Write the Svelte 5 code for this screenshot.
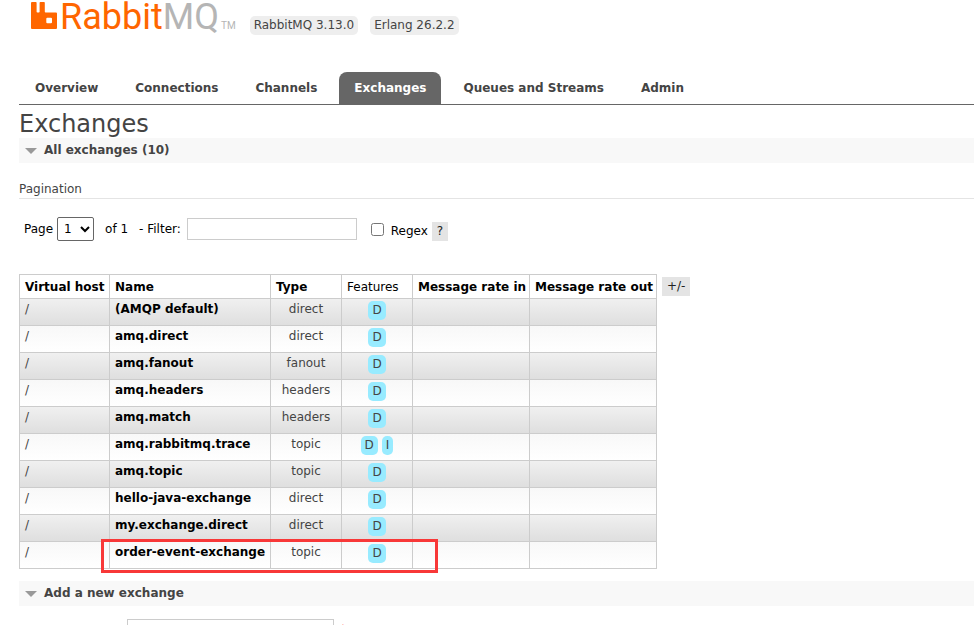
<script>
  const tabs = ['Overview', 'Connections', 'Channels', 'Exchanges', 'Queues and Streams', 'Admin'];
  const current = 'Exchanges';

  const exchanges = [
    { name: '(AMQP default)', type: 'direct', features: ['D'] },
    { name: 'amq.direct', type: 'direct', features: ['D'] },
    { name: 'amq.fanout', type: 'fanout', features: ['D'] },
    { name: 'amq.headers', type: 'headers', features: ['D'] },
    { name: 'amq.match', type: 'headers', features: ['D'] },
    { name: 'amq.rabbitmq.trace', type: 'topic', features: ['D', 'I'] },
    { name: 'amq.topic', type: 'topic', features: ['D'] },
    { name: 'hello-java-exchange', type: 'direct', features: ['D'] },
    { name: 'my.exchange.direct', type: 'direct', features: ['D'] },
    { name: 'order-event-exchange', type: 'topic', features: ['D'], marked: true }
  ];

  let filter = $state('');
  let regex = $state(false);
  let newName = $state('');
</script>

<div class="page">
  <header>
    <a class="logo" href="#/" aria-label="RabbitMQ">
      <svg width="26" height="28" viewBox="0 0 26 28" aria-hidden="true">
        <path
          fill="#f60"
          fill-rule="evenodd"
          d="M1 1h3.8q.8 0 .8.8v9q0 .8.8.8h1.400q.8 0 .8-.8v-9q0-.8.8-.8h3.600q.8 0 .8.8v9q0 .8.8.8H25q1 0 1 1V27q0 1-1 1H1q-1 0-1-1V2q0-1 1-1zM16.300 16.800q-1 0-1 1v3.400q0 1 1 1h3.700q1 0 1-1v-3.400q0-1-1-1z"
        />
      </svg>
      <span class="word">Rabbit<span class="mq">MQ</span></span>
      <span class="tm">TM</span>
    </a>
    <span class="version">RabbitMQ 3.13.0</span>
    <span class="version">Erlang 26.2.2</span>
  </header>

  <nav>
    {#each tabs as tab}
      <a href="#/{tab.toLowerCase()}" class:selected={tab === current}>{tab}</a>
    {/each}
  </nav>

  <main>
    <h1>Exchanges</h1>
    <h2><button type="button"><i class="arrow"></i>All exchanges (10)</button></h2>

    <h3>Pagination</h3>
    <div class="pager">
      <label for="page">Page</label>
      <select id="page"><option>1</option></select>
      <span class="total">of 1</span>
      <label class="filter" for="filter">- Filter:</label>
      <input id="filter" class="text" type="text" bind:value={filter} />
      <input id="regex" type="checkbox" bind:checked={regex} />
      <label class="low" for="regex">Regex</label>
      <button type="button" class="small low">?</button>
    </div>

    <div class="listing">
      <table>
        <colgroup>
          <col class="c-host" /><col class="c-name" /><col class="c-type" /><col class="c-type" />
          <col class="c-in" /><col class="c-out" />
        </colgroup>
        <thead>
          <tr>
            <th>Virtual host</th>
            <th>Name</th>
            <th>Type</th>
            <th class="plain">Features</th>
            <th>Message rate in</th>
            <th>Message rate out</th>
          </tr>
        </thead>
        <tbody>
          {#each exchanges as x}
            <tr>
              <td>/</td>
              <td class="name">
                {#if x.marked}<span class="mark"></span>{/if}
                <a href="#/exchanges/{x.name}">{x.name}</a>
              </td>
              <td class="center">{x.type}</td>
              <td class="features">
                <div>{#each x.features as f}<span class="badge">{f}</span>{/each}</div>
              </td>
              <td></td>
              <td></td>
            </tr>
          {/each}
        </tbody>
      </table>
      <button type="button" class="small">+/-</button>
    </div>

    <h2><button type="button"><i class="arrow"></i>Add a new exchange</button></h2>
    <div class="form">
      <input class="text" type="text" aria-label="Name" bind:value={newName} />
      <span class="required">*</span>
    </div>
  </main>
</div>

<style>
  :global(body) {
    background: #fff;
  }
  .page {
    box-sizing: border-box;
    height: 100vh;
    overflow: hidden;
    padding-left: 19px;
    font: 12px/16px 'DejaVu Sans', Verdana, sans-serif;
    color: #444;
  }
  header {
    display: flex;
    align-items: flex-start;
    height: 72px;
  }
  .logo {
    display: flex;
    align-items: flex-start;
    padding: 1px 0 0 12px;
    margin-right: 14px;
    text-decoration: none;
    font-family: Roboto, sans-serif;
  }
  .word {
    margin-left: 3px;
    font-size: 36px;
    line-height: 32px;
    color: #f60;
  }
  .mq,
  .tm {
    color: #b5b5b5;
  }
  .tm {
    margin: 17px 0 0 2px;
    font-size: 10px;
  }
  .version {
    margin: 16px 12px 0 0;
    padding: 0 4px;
    border-radius: 5px;
    background: #eee;
    line-height: 19px;
  }
  nav {
    display: flex;
    gap: 7px;
    padding-left: 1px;
    border-bottom: 1px solid #666;
  }
  nav a {
    padding: 0 15px;
    border-radius: 8px 8px 0 0;
    color: #444;
    font-weight: bold;
    line-height: 32px;
    text-decoration: none;
  }
  nav a.selected {
    background: #666;
    color: #fff;
  }
  h1 {
    margin: 0;
    padding-top: 6px;
    font-size: 24px;
    font-weight: normal;
    line-height: 27px;
  }
  h2 {
    margin: 0;
    background: #f8f8f8;
    line-height: 25px;
  }
  h2 button {
    display: flex;
    align-items: center;
    gap: 7px;
    padding: 0 6px;
    border: 0;
    background: none;
    color: #444;
    font: bold 12px/25px 'DejaVu Sans', Verdana, sans-serif;
  }
  .arrow {
    border: 6px solid transparent;
    border-top-color: #999;
    border-bottom: 0;
  }
  h3 {
    margin: 18px 0 0;
    padding-bottom: 1px;
    border-bottom: 1px solid #e4e4e4;
    font-size: 12px;
    font-weight: normal;
  }
  .pager {
    display: flex;
    align-items: center;
    padding: 18px 0 33px 5px;
    color: #000;
  }
  select {
    box-sizing: border-box;
    width: 37px;
    height: 24px;
    margin: 0 11px 0 4px;
    padding-left: 2px;
    border: 1px solid #666;
    border-radius: 2px;
    background: #fff;
    color: #000;
    font: inherit;
  }
  .filter {
    margin: 0 6px 0 11px;
  }
  .text {
    box-sizing: border-box;
    width: 170px;
    height: 22px;
    border: 1px solid #ccc;
    background: #fff;
    font: inherit;
  }
  input[type='checkbox'] {
    width: 13px;
    height: 13px;
    margin: 0 7px 0 14px;
  }
  .low {
    margin-top: 4px;
  }
  .small {
    padding: 0 5px;
    border: 0;
    background: #e4e4e4;
    color: #222;
    font: 12px/19px 'DejaVu Sans', Verdana, sans-serif;
  }
  .pager .small {
    margin-left: 4px;
  }
  .listing {
    display: flex;
    align-items: flex-start;
    gap: 5px;
    margin-bottom: 12px;
  }
  .listing > .small {
    margin-top: 3px;
  }
  table {
    table-layout: fixed;
    width: 638px;
    border-collapse: collapse;
  }
  .c-host {
    width: 90px;
  }
  .c-name {
    width: 161px;
  }
  .c-type {
    width: 71px;
  }
  .c-in {
    width: 117px;
  }
  .c-out {
    width: 127px;
  }
  th,
  td {
    border: 1px solid #ccc;
    padding: 0 5px;
    text-align: left;
    white-space: nowrap;
  }
  th {
    height: 23px;
    color: #000;
  }
  th.plain {
    font-weight: normal;
  }
  td {
    height: 24px;
    padding-top: 2px;
    vertical-align: top;
  }
  tbody tr:nth-child(odd) {
    background: linear-gradient(#f0f0f0, #dedede);
  }
  tbody tr:nth-child(even) {
    background: linear-gradient(#f8f8f8, #fff);
  }
  .name {
    position: relative;
  }
  .name a {
    color: #000;
    font-weight: bold;
    text-decoration: none;
  }
  .mark {
    position: absolute;
    top: -3px;
    left: -9px;
    width: 331px;
    height: 28px;
    border: 3px solid #f83838;
    pointer-events: none;
  }
  .center {
    text-align: center;
  }
  .features div {
    display: flex;
    justify-content: center;
    gap: 4px;
  }
  .badge {
    padding: 0 4px;
    border-radius: 5px;
    background: #98ebff;
    line-height: 19px;
  }
  .form {
    display: flex;
    gap: 6px;
    padding: 13px 0 0 108px;
  }
  .form .text {
    width: 207px;
  }
  .required {
    padding-top: 2px;
    color: #f88;
  }
</style>
